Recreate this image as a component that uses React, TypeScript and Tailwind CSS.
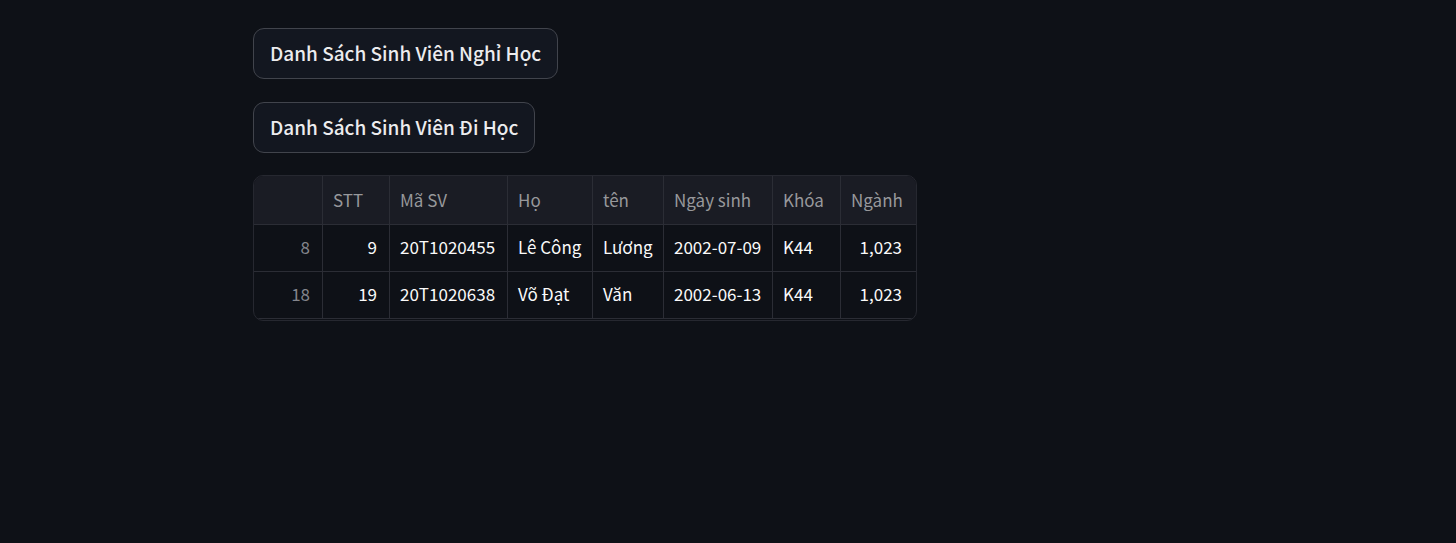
const columns = ['STT', 'Mã SV', 'Họ', 'tên', 'Ngày sinh', 'Khóa', 'Ngành'];

const rows = [
  { index: 8, cells: ['9', '20T1020455', 'Lê Công', 'Lương', '2002-07-09', 'K44', '1,023'] },
  { index: 18, cells: ['19', '20T1020638', 'Võ Đạt', 'Văn', '2002-06-13', 'K44', '1,023'] },
];

const isNumeric = (column: number) => column === 0 || column === 6;

function ActionButton({ label }: { label: string }) {
  return (
    <button
      type="button"
      className="rounded-[11px] border border-[#41444c] bg-[#131720] px-4 pt-[7px] pb-[9px] text-[19px] leading-[33px] font-medium text-[#ececee]"
    >
      {label}
    </button>
  );
}

export default function App() {
  return (
    <main className="min-h-screen bg-[#0e1117] font-['Noto_Sans_CJK_SC','Noto_Sans',sans-serif]">
      <div className="ml-[253px] flex flex-col items-start gap-[22px] pt-7">
        <div className="flex flex-col items-start gap-[23px]">
          <ActionButton label="Danh Sách Sinh Viên Nghỉ Học" />
          <ActionButton label="Danh Sách Sinh Viên Đi Học" />
        </div>
        <div className="overflow-hidden rounded-[10px] border border-[#262830] pb-px">
          <table className="w-[662px] table-fixed border-separate border-spacing-0 text-[17px] leading-6 whitespace-nowrap text-[#fafafa]">
            <colgroup>
              <col className="w-[69px]" />
              <col className="w-[67px]" />
              <col className="w-[118px]" />
              <col className="w-[85px]" />
              <col className="w-[71px]" />
              <col className="w-[109px]" />
              <col className="w-[68px]" />
              <col className="w-[75px]" />
            </colgroup>
            <thead>
              <tr className="h-[49px] bg-[#1a1c24] text-left text-[#97989b]">
                <th aria-label="Index" className="border-r border-b border-[#2b2d35]" />
                {columns.map((column) => (
                  <th
                    key={column}
                    scope="col"
                    className="border-r border-b border-[#2b2d35] px-[10px] font-normal last:border-r-0"
                  >
                    {column}
                  </th>
                ))}
              </tr>
            </thead>
            <tbody>
              {rows.map((row) => (
                <tr key={row.index} className="h-[47px]">
                  <th
                    scope="row"
                    className="border-r border-b border-[#2b2d35] pr-3 pb-[2px] pl-[10px] text-right font-normal text-[#83858c]"
                  >
                    {row.index}
                  </th>
                  {row.cells.map((cell, i) => (
                    <td
                      key={columns[i]}
                      className={`border-r border-b border-[#2b2d35] pb-[2px] pl-[10px] last:border-r-0 last:pr-[14px] ${isNumeric(i) ? 'pr-3 text-right' : 'text-left'}`}
                    >
                      {cell}
                    </td>
                  ))}
                </tr>
              ))}
            </tbody>
          </table>
        </div>
      </div>
    </main>
  );
}
